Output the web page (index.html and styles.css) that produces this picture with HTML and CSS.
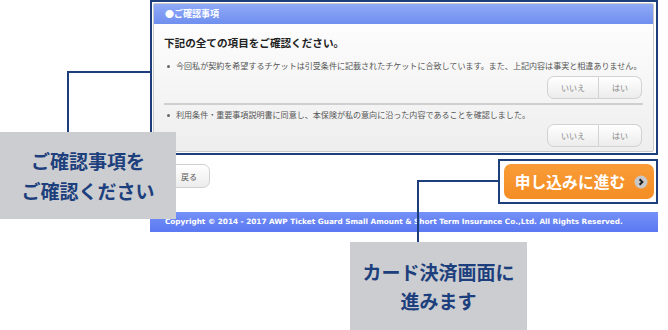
FILE: index.html
```html
<!DOCTYPE html>
<html lang="ja">
<head>
  <meta charset="UTF-8">
  <meta name="viewport" content="width=device-width, initial-scale=1.0">
  <title>ご確認事項</title>
  <link rel="stylesheet" href="styles.css">
</head>
<body>

  <div class="page">

    <!-- confirmation panel, highlighted -->
    <div class="hl-frame confirm-frame">
      <div class="panel">
        <div class="panel-head">●ご確認事項</div>
        <div class="panel-body">
          <h2 class="panel-title">下記の全ての項目をご確認ください。</h2>

          <div class="check-item">
            <p class="check-text">今回私が契約を希望するチケットは引受条件に記載されたチケットに合致しています。また、上記内容は事実と相違ありません。</p>
            <div class="yn-group">
              <button class="yn-btn yn-no">いいえ</button>
              <button class="yn-btn yn-yes">はい</button>
            </div>
          </div>

          <div class="check-item">
            <p class="check-text">利用条件・重要事項説明書に同意し、本保険が私の意向に沿った内容であることを確認しました。</p>
            <div class="yn-group">
              <button class="yn-btn yn-no">いいえ</button>
              <button class="yn-btn yn-yes">はい</button>
            </div>
          </div>
        </div>
      </div>
    </div>

    <div class="action-row">
      <button class="back-btn">戻る</button>
      <div class="hl-frame next-frame">
        <button class="next-btn">
          申し込みに進む
          <svg class="next-icon" width="14" height="14" viewBox="0 0 14 14">
            <circle cx="7" cy="7" r="6.5" fill="#c8c8c8"/>
            <path d="M5.6 4.2 L8.4 7 L5.6 9.8" fill="none" stroke="#222" stroke-width="2"/>
          </svg>
        </button>
      </div>
    </div>

    <div class="footer">Copyright © 2014 - 2017 AWP Ticket Guard Small Amount &amp; Short Term Insurance Co.,Ltd. All Rights Reserved.</div>
  </div>

  <!-- callouts -->
  <div class="connector connector-left"></div>
  <div class="callout callout-left">ご確認事項を<br>ご確認ください</div>

  <div class="connector connector-right"></div>
  <div class="callout callout-right">カード決済画面に<br>進みます</div>

</body>
</html>
```

FILE: styles.css
```css
body {
  margin: 0;
  width: 668px;
  height: 330px;
  overflow: hidden;
  position: relative;
  background: #fff;
  font-family: "Noto Sans CJK JP", sans-serif;
}

.page {
  margin-left: 150px;
  width: 508px;
}

.hl-frame {
  border: 2px solid #1c3f7c;
}

.confirm-frame {
  padding: 1px 2px 1px 1px;
}

.panel {
  border: 1px solid #c9c9c9;
  border-radius: 2px;
  background: linear-gradient(to bottom, #ffffff, #eeeeee);
}

.panel-head {
  height: 20px;
  line-height: 19px;
  padding-left: 11px;
  background: linear-gradient(to bottom, #90aaf7, #6f8fef);
  color: #fff;
  font-size: 9px;
  font-weight: bold;
}

.panel-body {
  padding: 0 10px;
}

.panel-title {
  margin: 0;
  padding-top: 12px;
  height: 14px;
  line-height: 14px;
  font-size: 10.6px;
  font-weight: bold;
  color: #222;
}

.check-item {
  padding-top: 10px;
  padding-bottom: 4px;
}

.check-item + .check-item {
  border-top: 2px solid #cfcfcf;
  padding-top: 4px;
}

.check-item + .check-item .yn-group {
  margin-top: 3px;
}

.check-text {
  margin: 0;
  padding-left: 12px;
  position: relative;
  font-size: 8.05px;
  line-height: 12px;
  color: #555;
  white-space: nowrap;
}

.check-text:before {
  content: "";
  position: absolute;
  left: 3px;
  top: 5px;
  width: 3px;
  height: 3px;
  border-radius: 50%;
  background: #666;
}

.yn-group {
  display: flex;
  justify-content: flex-end;
  margin-top: 4px;
  margin-right: 1px;
}

.yn-btn {
  height: 23px;
  border: 1px solid #d2d2d2;
  background: linear-gradient(to bottom, #ffffff, #ececec);
  color: #888;
  font-family: "Noto Sans CJK JP", sans-serif;
  font-size: 8px;
  padding: 0;
}

.yn-no {
  width: 52px;
  border-radius: 7px 0 0 7px;
}

.yn-yes {
  width: 43px;
  border-left: none;
  border-radius: 0 7px 7px 0;
}

.action-row {
  display: flex;
  justify-content: space-between;
  align-items: flex-start;
  margin-top: 4px;
}

.back-btn {
  margin-top: 5px;
  margin-left: 15px;
  width: 45px;
  height: 24px;
  padding: 0 0 0 15px;
  border: 1px solid #d0d0d0;
  border-radius: 7px;
  background: linear-gradient(to bottom, #ffffff, #ececec);
  color: #555;
  font-family: "Noto Sans CJK JP", sans-serif;
  font-size: 8px;
  text-align: left;
}

.next-frame {
  padding: 3px 2px 3px 4px;
}

.next-btn {
  display: flex;
  align-items: center;
  justify-content: center;
  gap: 9px;
  width: 150px;
  height: 35px;
  padding: 0 0 0 5px;
  border: none;
  border-radius: 7px;
  background: linear-gradient(to bottom, #f99c38, #f48d24);
  color: #fff;
  font-family: "Noto Sans CJK JP", sans-serif;
  font-size: 15.8px;
  font-weight: bold;
}

.next-icon {
  display: block;
}

.footer {
  margin-top: 8px;
  height: 20px;
  line-height: 20px;
  padding-left: 15px;
  background: linear-gradient(to bottom, #7590f7, #5b79f2);
  color: #fff;
  font-family: "DejaVu Sans", sans-serif;
  font-size: 7.3px;
  font-weight: bold;
  white-space: nowrap;
}

/* callouts overlay the screenshot */
.connector {
  position: absolute;
  border-top: 2px solid #1c3f7c;
  border-left: 2px solid #1c3f7c;
}

.connector-left {
  left: 67px;
  top: 71px;
  width: 83px;
  height: 61px;
}

.connector-right {
  left: 417px;
  top: 180px;
  width: 81px;
  height: 62px;
}

.callout {
  position: absolute;
  background: #cbcdd0;
  color: #1d3f7d;
  font-size: 19px;
  font-weight: bold;
  line-height: 30px;
  text-align: center;
  display: flex;
  align-items: center;
  justify-content: center;
}

.callout-left {
  left: 0;
  top: 132px;
  width: 176px;
  height: 87px;
}

.callout-right {
  left: 350px;
  top: 242px;
  width: 177px;
  height: 88px;
  line-height: 29px;
}
```
